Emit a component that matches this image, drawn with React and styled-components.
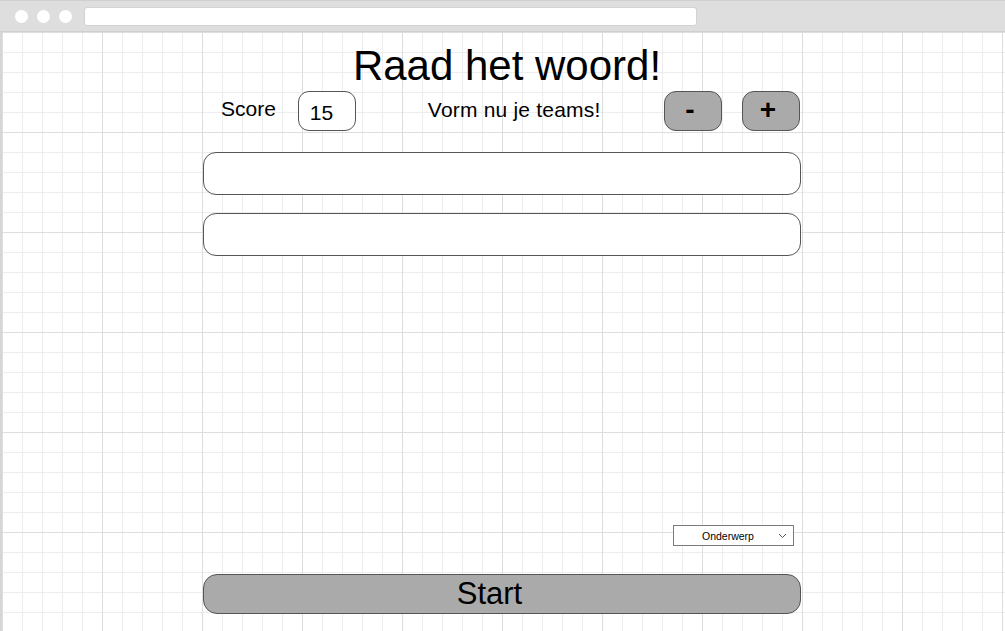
import React from 'react'
import styled, { createGlobalStyle } from 'styled-components'

const GlobalStyle = createGlobalStyle`
   html, body, #root {
      margin: 0;
      height: 100%;
   }
   body {
      font-family: "Liberation Sans", Arial, sans-serif;
      color: #000;
      background: #fff;
   }
`

const Window = styled.div`
   height: 100%;
   display: flex;
   flex-direction: column;
   overflow: hidden;
`

const TopBar = styled.div`
   height: 32px;
   flex-shrink: 0;
   box-sizing: border-box;
   background: #dedede;
   border-top: 1px solid #cfcfcf;
   border-bottom: 1px solid #cfcfcf;
   display: flex;
   align-items: center;
   padding: 0 0 0 15px;
`

const Dot = styled.span`
   width: 13px;
   height: 13px;
   border-radius: 50%;
   background: #fff;
   margin-right: 9px;
`

const AddressBar = styled.div`
   width: 613px;
   height: 19px;
   margin-left: 3px;
   box-sizing: border-box;
   background: #fff;
   border: 1px solid #d2d2d2;
   border-radius: 3px;
`

const Canvas = styled.div`
   flex: 1;
   display: flex;
   justify-content: flex-start;
   border-left: 2px solid #d6d6d6;
   background-color: #fff;
   background-image:
      linear-gradient(to right, #dedede 1px, transparent 1px),
      linear-gradient(to bottom, #dedede 1px, transparent 1px),
      linear-gradient(to right, #ededed 1px, transparent 1px),
      linear-gradient(to bottom, #ededed 1px, transparent 1px);
   background-size: 100px 100px, 100px 100px, 20px 20px, 20px 20px;
`

const Column = styled.div`
   width: 598px;
   margin-left: 201px;
   display: flex;
   flex-direction: column;
   padding-bottom: 17px;
`

const Title = styled.h1`
   margin: 10px 0 0 10px;
   height: 48px;
   font-size: 42px;
   line-height: 48px;
   font-weight: normal;
   text-align: center;
`

const Row = styled.div`
   display: flex;
   align-items: center;
   height: 40px;
   margin-top: 1px;
   padding: 0 1px 0 18px;
`

const Label = styled.span`
   font-size: 21px;
   margin-top: ${p => p.$shift || 0}px;
   letter-spacing: ${p => p.$spacing || 0}px;
`

const ScoreBox = styled.div`
   width: 58px;
   height: 40px;
   box-sizing: border-box;
   border: 1px solid #555;
   border-radius: 11px;
   background: #fff;
   margin: 0 72px 0 22px;
   display: flex;
   align-items: center;
   padding: 4px 0 0 11px;
   font-size: 21px;
`

const RoundButton = styled.button`
   width: 58px;
   height: 40px;
   box-sizing: border-box;
   border: 1px solid #555;
   border-radius: 12px;
   background: #aaaaaa;
   font-family: "Liberation Sans", Arial, sans-serif;
   font-weight: bold;
   font-size: 28px;
   line-height: 1;
   padding: 0 6px 2px 0;
   margin-left: ${p => p.$gap}px;
   color: #000;
`

const TextField = styled.div`
   height: 43px;
   box-sizing: border-box;
   border: 1px solid #555;
   border-radius: 13px;
   background: #fff;
   margin-top: ${p => p.$top}px;
`

const Spacer = styled.div`
   flex: 1;
`

const SelectRow = styled.div`
   display: flex;
   justify-content: flex-end;
   padding-right: 7px;
`

const Select = styled.div`
   width: 121px;
   height: 21px;
   box-sizing: border-box;
   border: 1px solid #7a7a7a;
   background: #fff;
   display: flex;
   align-items: center;
   font-size: 10.5px;
   padding: 1px 6px 0 28px;
`

const SelectText = styled.span`
   flex: 1;
`

const StartButton = styled.button`
   margin-top: 28px;
   height: 40px;
   box-sizing: border-box;
   border: 1px solid #555;
   border-radius: 14px;
   background: #aaaaaa;
   font-family: "Liberation Sans", Arial, sans-serif;
   font-size: 31px;
   color: #000;
   padding: 0 25px 0 0;
`

function Chevron() {
   return (
      <svg width="9" height="6" viewBox="0 0 9 6">
         <path d="M1 1 L4.5 4.5 L8 1" fill="none" stroke="#555" strokeWidth="1" />
      </svg>
   )
}

export default function App() {
   return (
      <Window>
         <GlobalStyle />
         <TopBar>
            <Dot />
            <Dot />
            <Dot />
            <AddressBar />
         </TopBar>
         <Canvas>
            <Column>
               <Title>Raad het woord!</Title>
               <Row>
                  <Label $shift={-5}>Score</Label>
                  <ScoreBox>15</ScoreBox>
                  <Label $shift={-2} $spacing={0.2}>Vorm nu je teams!</Label>
                  <Spacer />
                  <RoundButton $gap={0}>-</RoundButton>
                  <RoundButton $gap={20}>+</RoundButton>
               </Row>
               <TextField $top={21} />
               <TextField $top={18} />
               <Spacer />
               <SelectRow>
                  <Select>
                     <SelectText>Onderwerp</SelectText>
                     <Chevron />
                  </Select>
               </SelectRow>
               <StartButton>Start</StartButton>
            </Column>
         </Canvas>
      </Window>
   )
}
